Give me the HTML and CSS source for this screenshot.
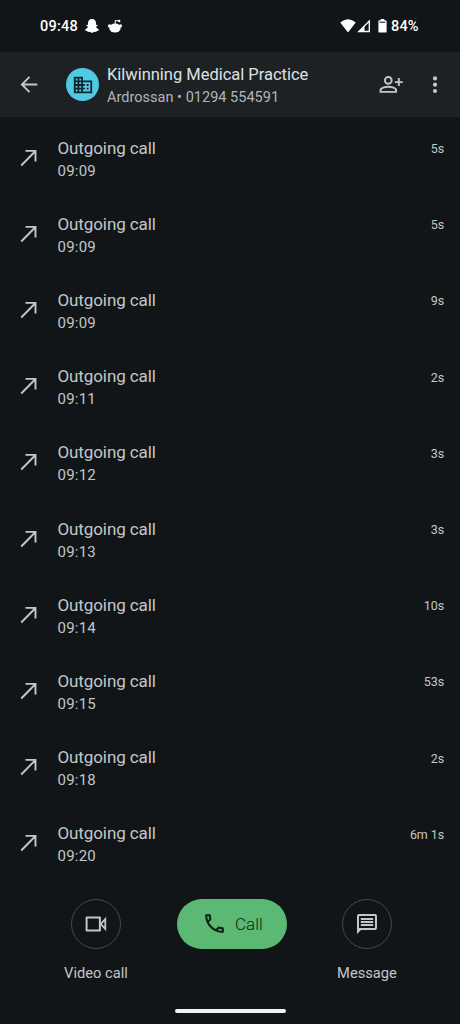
FILE: index.html
```html
<!DOCTYPE html>
<html lang="en">
<head>
<meta charset="utf-8">
<title>Call history</title>
<link rel="stylesheet" href="styles.css">
</head>
<body>
<div class="screen">
  <div class="status">
    <span class="clock">09:48</span>
    <svg class="ghost" width="16" height="16" viewBox="0 0 16 16"><path fill="#fff" d="M8 1c2.600 0 4 1.700 4 4v2l1.500-.2.3.8-1.700 1.200c.6 1.500 1.500 2.300 2.900 2.800l-.3.900-2 .4-.4 1-2-.1L8 15l-2.300-1.200-2 .1-.4-1-2-.4-.3-.9c1.400-.5 2.300-1.300 2.900-2.800L2.200 7.600l.3-.8L4 7V5c0-2.300 1.400-4 4-4z"/></svg>
    <svg class="reddit" width="16" height="16" viewBox="0 0 16 16"><ellipse cx="8" cy="10" rx="5.700" ry="4.500" fill="#fff"/><circle cx="2.500" cy="7.900" r="1.600" fill="#fff"/><circle cx="13.500" cy="7.900" r="1.600" fill="#fff"/><path d="M8.200 6V2.600l3.500.3" fill="none" stroke="#fff"/><circle cx="12.200" cy="3" r="1.200" fill="#fff"/></svg>
    <span class="grow"></span>
    <svg width="16" height="14" viewBox="0 0 16 14"><path fill="#fff" stroke="#fff" stroke-linejoin="round" d="M.8 3.600Q8-2 15.200 3.600L8 12.800z"/></svg>
    <svg class="signal" width="14" height="14" viewBox="0 0 14 14"><path fill="none" stroke="#fff" stroke-width="1.300" d="M12.300 2v10.500H1.800z"/><path fill="#fff" d="M7.500 7v5.500H2z"/></svg>
    <svg class="battery" width="9" height="14" viewBox="0 0 9 14"><path fill="#fff" d="M2.700 0h3.600v1.200H7.500Q8.600 1.200 8.600 2.400v10Q8.600 13.600 7.400 13.600H1.600Q.4 13.600.4 12.400v-10Q.4 1.200 1.600 1.200h1.100z"/><path stroke="#111518" d="M1.600 3.200h5.800"/></svg>
    <span class="percent">84%</span>
  </div>
  <header class="header">
    <svg class="back" width="24" height="24" viewBox="0 0 24 24"><path fill="none" stroke="#c4c6c8" stroke-width="1.900" d="M20.300 11.500H5m7.500-7.600l-7.600 7.600 7.600 7.600"/></svg>
    <span class="avatar"><svg width="22" height="22" viewBox="0 0 24 24"><path fill="#11272e" d="M12 7V3H2v18h20V7H12zM6 19H4v-2h2v2zm0-4H4v-2h2v2zm0-4H4V9h2v2zm0-4H4V5h2v2zm4 12H8v-2h2v2zm0-4H8v-2h2v2zm0-4H8V9h2v2zm0-4H8V5h2v2zm10 12h-8v-2h2v-2h-2v-2h2v-2h-2V9h8v10zm-2-8h-2v2h2v-2zm0 4h-2v2h2v-2z"/></svg></span>
    <div class="who"><div class="name">Kilwinning Medical Practice</div><div class="detail">Ardrossan • 01294 554591</div></div>
    <svg class="add" width="26" height="20" viewBox="0 0 26 20"><g fill="none" stroke="#c4c6c8" stroke-width="1.900"><circle cx="10.300" cy="5.400" r="3.400"/><path d="M2.500 16.900v-1.700c0-2.100 4.600-3.400 7.800-3.400s7.800 1.300 7.800 3.400v1.700zM20.800 3.100v8M16.800 7.100h8"/></g></svg>
    <svg class="more" width="6" height="20" viewBox="0 0 6 20"><g fill="#c4c6c8"><circle cx="3" cy="3.400" r="2.100"/><circle cx="3" cy="9.700" r="2.100"/><circle cx="3" cy="16" r="2.100"/></g></svg>
  </header>
  <ul class="calls" id="calls"></ul>
  <footer class="actions">
    <div class="action video"><span class="ring"><svg width="24" height="24" viewBox="0 0 24 24"><path fill="none" stroke="#c4c6c8" stroke-width="2" stroke-linejoin="round" d="M2.600 5.600h13.300v12.800H2.600z"/><path fill="none" stroke="#c4c6c8" stroke-width="1.800" d="M21.300 7.100v9.800l-4.500-4.900z"/></svg></span><span class="caption">Video call</span></div>
    <div class="call"><svg width="25" height="25" viewBox="0 0 24 24"><path fill="#0d2515" d="M6.540 5c.06.890.21 1.760.45 2.590l-1.200 1.200c-.41-1.200-.67-2.470-.76-3.790h1.510m9.860 12.020c.85.240 1.720.390 2.600.450v1.490c-1.320-.09-2.590-.35-3.800-.75l1.200-1.190M7.500 3H4c-.55 0-1 .45-1 1 0 9.390 7.610 17 17 17 .55 0 1-.45 1-1v-3.490c0-.55-.45-1-1-1-1.240 0-2.450-.2-3.570-.57-.1-.04-.21-.05-.31-.05-.26 0-.51.1-.71.290l-2.200 2.200c-2.830-1.450-5.150-3.760-6.590-6.590l2.200-2.200c.28-.28.360-.67.250-1.020C8.700 6.450 8.500 5.250 8.500 4c0-.55-.45-1-1-1z"/></svg><span>Call</span></div>
    <div class="action message"><span class="ring"><svg width="24" height="24" viewBox="0 0 24 24"><path fill="#c4c6c8" d="M4 2h16a2 2 0 0 1 2 2v12a2 2 0 0 1-2 2H6l-4 4V4a2 2 0 0 1 2-2zm0 2v12h16V4z"/><path stroke="#c4c6c8" stroke-width="1.900" d="M5.800 7h12.400M5.800 10h12.400M5.800 13h12.400"/></svg></span><span class="caption">Message</span></div>
  </footer>
  <div class="home"></div>
</div>
<script src="calls.js"></script>
</body>
</html>
```
FILE: styles.css
```css
* { box-sizing: border-box; }
body { margin: 0; background: #111518; color: #c4c6c8; font-family: Roboto, "Open Sans", sans-serif; }
svg { display: block; flex: none; }
.screen { width: 460px; height: 1024px; display: flex; flex-direction: column; overflow: hidden; white-space: nowrap; }
.status { height: 52px; flex: none; display: flex; align-items: center; padding: 0 40px; color: #fff; font-size: 14.500px; font-weight: 500; }
.clock { width: 44px; letter-spacing: .25px; }
.reddit { margin-left: 7px; }
.grow { flex: 1; }
.signal { margin-left: 1px; }
.battery { margin-left: 7px; }
.percent { width: 29px; margin-left: 4px; letter-spacing: .15px; }
.header { height: 65px; flex: none; display: flex; align-items: center; background: #1d2124; padding: 0 22px 0 17px; }
.avatar { width: 33px; height: 33px; margin-left: 25px; border-radius: 50%; background: #4ecbe3; display: flex; align-items: center; justify-content: center; }
.who { flex: 1; margin-left: 8px; padding-top: 2px; }
.name { font-size: 16.500px; line-height: 23px; letter-spacing: -.02px; color: #dfe1e3; }
.detail { font-size: 14.500px; line-height: 23px; letter-spacing: .02px; color: #b2b5b7; }
.more { margin-left: 28px; }
.calls { list-style: none; margin: 0; padding: 2.500px 0 0; }
.row { height: 76.200px; display: flex; align-items: center; padding: 0 16px 0 17px; }
.text { flex: 1; margin-left: 16.500px; padding-top: 4px; }
.title { font-size: 17px; line-height: 23px; letter-spacing: -.1px; }
.time { font-size: 15px; line-height: 23px; letter-spacing: .22px; }
.duration { font-size: 12.500px; letter-spacing: -.1px; padding-bottom: 18px; }
.actions { flex: none; display: flex; justify-content: space-between; padding: 17.500px 53px 0 54px; }
.action { display: flex; flex-direction: column; align-items: center; width: 84px; }
.message { width: 80px; }
.ring { width: 50px; height: 50px; border: 1px solid #46494c; border-radius: 50%; display: flex; align-items: center; justify-content: center; }
.caption { font-size: 14.700px; line-height: 20px; margin-top: 14px; }
.call { width: 110px; height: 50px; border-radius: 25px; background: #5bb974; color: #0d2515; display: flex; align-items: center; padding-left: 25px; margin-right: 1px; font-size: 17px; font-weight: 300; }
.call span { margin-left: 8px; }
.home { width: 111px; height: 4px; border-radius: 2px; background: #f2f2f2; margin: 26.500px 0 0 174.500px; }
```
FILE: calls.js
```javascript
const calls = [["09:09", "5s"], ["09:09", "5s"], ["09:09", "9s"], ["09:11", "2s"], ["09:12", "3s"], ["09:13", "3s"], ["09:14", "10s"], ["09:15", "53s"], ["09:18", "2s"], ["09:20", "6m 1s"]];
document.getElementById("calls").innerHTML = calls.map(([time, duration]) => `
  <li class="row">
    <svg width="24" height="24" viewBox="0 0 24 24"><path fill="none" stroke="#c4c6c8" stroke-width="1.900" d="M4.200 19.500L18.500 5M8.500 4.900h10v10.600"/></svg>
    <div class="text"><div class="title">Outgoing call</div><div class="time">${time}</div></div>
    <span class="duration">${duration}</span>
  </li>`).join("");
```
